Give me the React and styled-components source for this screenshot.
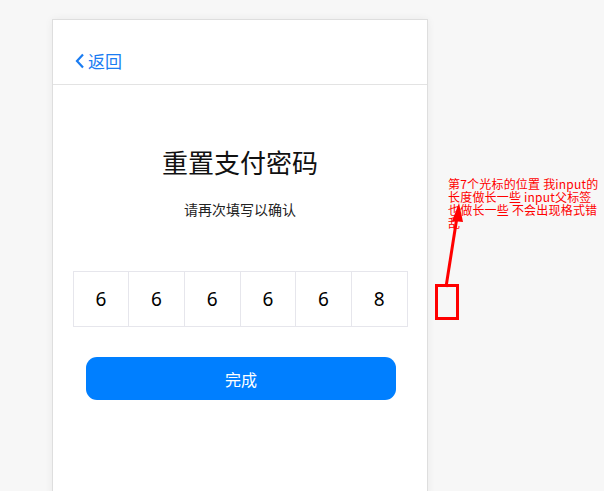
import React from 'react';
import styled, {createGlobalStyle} from 'styled-components';

const GlobalStyle = createGlobalStyle`
    html, body {
        margin: 0;
        padding: 0;
        background: #f7f7f7;
        font-family: "Noto Sans CJK SC", "Noto Sans", sans-serif;
        overflow: hidden;
    }
`;

const Page = styled.div`
    position: relative;
    width: 604px;
    height: 491px;
    padding: 19px 0 0 52px;
    box-sizing: border-box;
`;

const Card = styled.div`
    width: 376px;
    height: 480px;
    box-sizing: border-box;
    background: #fff;
    border: 1px solid #dedede;
    box-shadow: 0 0 8px rgba(0, 0, 0, 0.06);
    display: flex;
    flex-direction: column;
    align-items: center;
`;

const Header = styled.div`
    align-self: stretch;
    height: 65px;
    box-sizing: border-box;
    border-bottom: 1px solid #e3e3e3;
    display: flex;
    align-items: flex-end;
    padding: 0 0 11px 22px;
`;

const BackLink = styled.a`
    display: flex;
    align-items: center;
    gap: 3px;
    color: #1a7cf2;
    font-size: 17px;
    line-height: 24px;
    text-decoration: none;
    cursor: pointer;
`;

const Title = styled.h1`
    margin: 59px 0 0;
    font-size: 26px;
    line-height: 36px;
    font-weight: 400;
    color: #111;
`;

const Subtitle = styled.p`
    margin: 19px 0 0;
    font-size: 14px;
    line-height: 20px;
    color: #222;
`;

const CodeRow = styled.div`
    margin: 52px 0 0;
    width: 335px;
    box-sizing: border-box;
    display: flex;
    border: 1px solid #e6e6ec;
`;

const CodeCell = styled.div`
    flex: 1;
    height: 54px;
    display: flex;
    align-items: center;
    justify-content: center;
    font-size: 19px;
    color: #000;
    font-family: "Noto Sans", sans-serif;
    & + & {
        border-left: 1px solid #e6e6ec;
    }
`;

const DoneButton = styled.button`
    margin: 30px 0 0 2px;
    width: 310px;
    height: 43px;
    border: none;
    border-radius: 11px;
    background: #007fff;
    color: #fff;
    font-family: inherit;
    font-size: 16px;
    cursor: pointer;
`;

const NoteText = styled.div`
    position: absolute;
    left: 448px;
    top: 177px;
    width: 156px;
    color: #ff0000;
    font-size: 12px;
    line-height: 13px;
    white-space: pre;
    letter-spacing: 0.2px;
`;

const NoteMarks = styled.svg`
    position: absolute;
    left: 430px;
    top: 195px;
    overflow: visible;
`;

const digits = ['6', '6', '6', '6', '6', '8'];

export default function App() {
    return (
        <Page>
            <GlobalStyle />
            <Card>
                <Header>
                    <BackLink>
                        <svg width="10" height="16" viewBox="0 0 10 16">
                            <polyline points="8,1.5 2,8 8,14.5" fill="none" stroke="#1a7cf2" strokeWidth="2.2" />
                        </svg>
                        返回
                    </BackLink>
                </Header>
                <Title>重置支付密码</Title>
                <Subtitle>请再次填写以确认</Subtitle>
                <CodeRow>
                    {digits.map((d, i) => (
                        <CodeCell key={i}>{d}</CodeCell>
                    ))}
                </CodeRow>
                <DoneButton>完成</DoneButton>
            </Card>
            <NoteText>{'第7个光标的位置 我input的\n长度做长一些 input父标签\n也做长一些 不会出现格式错\n乱'}</NoteText>
            <NoteMarks width="40" height="130" viewBox="0 0 40 130">
                <rect x="6.5" y="90.5" width="21" height="33" fill="none" stroke="#ff0000" strokeWidth="3" />
                <line x1="16" y1="92" x2="27" y2="22" stroke="#ff0000" strokeWidth="3" />
                <polygon points="29,8 22,26 33,27" fill="#ff0000" />
            </NoteMarks>
        </Page>
    );
}
